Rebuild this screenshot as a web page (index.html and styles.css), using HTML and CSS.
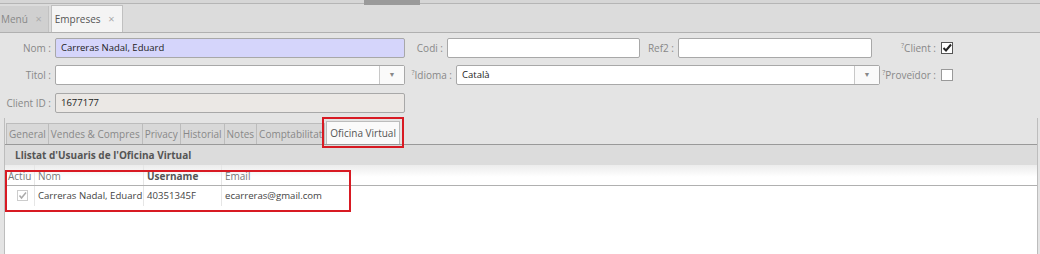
FILE: index.html
```html
<!DOCTYPE html>
<html lang="ca">
<head>
  <meta charset="UTF-8">
  <title>Empreses</title>
  <link rel="stylesheet" href="styles.css">
</head>
<body>
  <div class="topbar"><span class="handle"></span></div>
  <div class="doc-tabs">
    <div class="doc-tab">Menú <span class="close">×</span></div>
    <div class="doc-tab active">Empreses <span class="close">×</span></div>
  </div>
  <div class="form">
    <div class="row">
      <label class="lbl w-first">Nom :</label>
      <div class="field highlight w-main">Carreras Nadal, Eduard</div>
      <label class="lbl w-codi">Codi :</label>
      <div class="field w-codi-in"></div>
      <label class="lbl w-ref">Ref2 :</label>
      <div class="field w-ref-in"></div>
      <label class="lbl w-check"><sup>?</sup>Client :</label>
      <span class="check checked">
        <svg width="10" height="10" viewBox="0 0 10 10"><path d="M1.5 5 L4 7.5 L9 1.5" fill="none" stroke="#222" stroke-width="2"/></svg>
      </span>
    </div>
    <div class="row">
      <label class="lbl w-first">Titol :</label>
      <div class="field select w-main"><span class="value"></span><span class="arrow">▼</span></div>
      <label class="lbl w-idioma"><sup>?</sup>Idioma :</label>
      <div class="field select w-idioma-in"><span class="value">Català</span><span class="arrow">▼</span></div>
      <label class="lbl w-prov"><sup>?</sup>Proveïdor :</label>
      <span class="check"></span>
    </div>
    <div class="row">
      <label class="lbl w-first">Client ID :</label>
      <div class="field disabled w-main">1677177</div>
    </div>
  </div>
  <div class="panel">
    <div class="tabs">
      <div class="tab">General</div>
      <div class="tab">Vendes &amp; Compres</div>
      <div class="tab">Privacy</div>
      <div class="tab">Historial</div>
      <div class="tab">Notes</div>
      <div class="tab">Comptabilitat</div>
      <div class="tab selected">Oficina Virtual</div>
    </div>
    <div class="panel-title">Llistat d'Usuaris de l'Oficina Virtual</div>
    <div class="grid">
      <div class="grid-head">
        <div class="col c-actiu">Actiu</div>
        <div class="col c-nom">Nom</div>
        <div class="col c-user bold">Username</div>
        <div class="col c-email">Email</div>
      </div>
      <div class="grid-row">
        <div class="col c-actiu"><span class="mini-check">
          <svg width="9" height="9" viewBox="0 0 9 9"><path d="M1.5 4.5 L3.5 7 L8 1.5" fill="none" stroke="#aaa" stroke-width="1.5"/></svg>
        </span></div>
        <div class="col c-nom">Carreras Nadal, Eduard</div>
        <div class="col c-user">40351345F</div>
        <div class="col c-email">ecarreras@gmail.com</div>
      </div>
      <div class="marker"></div>
    </div>
  </div>
</body>
</html>
```

FILE: styles.css
```css
body {
  margin: 0;
  font-family: "Open Sans", Arial, sans-serif;
  font-size: 10px;
  color: #333;
  background: #e4e4e4;
  height: 254px;
  overflow: hidden;
}
.topbar {
  height: 3px;
  background: #d6d6d6;
  border-bottom: 1px solid #b5b5b5;
  position: relative;
}
.handle {
  position: absolute;
  left: 364px;
  top: 0;
  width: 56px;
  height: 5px;
  background: #9a9a9a;
}
.doc-tabs {
  display: flex;
  align-items: flex-end;
  height: 28px;
  background: #dcdcdc;
  border-bottom: 1px solid #b0b0b0;
}
.doc-tab {
  height: 26px;
  line-height: 26px;
  padding: 0 6px 0 1px;
  background: #d0d0d0;
  color: #888;
  border-right: 1px solid #c2c2c2;
  white-space: nowrap;
}
.doc-tab.active {
  background: #f4f4f4;
  color: #555;
  border: 1px solid #c0c0c0;
  border-bottom: none;
  margin-left: 2px;
  padding: 0 8px 0 3px;
}
.close {
  color: #aaa;
  font-size: 11px;
  margin-left: 5px;
}
.form {
  padding: 1px 0 0 0;
  height: 84px;
}
.row {
  display: flex;
  align-items: center;
  height: 27.5px;
}
.lbl {
  text-align: right;
  color: #888;
  padding-right: 4px;
  box-sizing: border-box;
  white-space: nowrap;
}
.lbl sup {
  font-size: 7px;
  vertical-align: 4px;
}
.w-first { width: 55px; }
.w-main { width: 350px; }
.w-codi { width: 42px; }
.w-codi-in { width: 193px; }
.w-ref { width: 38px; }
.w-ref-in { width: 194px; }
.w-check { width: 68px; }
.w-idioma { width: 51px; }
.w-idioma-in { width: 424px; }
.w-prov { width: 60px; }
.field {
  height: 20px;
  line-height: 18px;
  box-sizing: border-box;
  border: 1px solid #a8a8a8;
  border-radius: 2px;
  background: #fff;
  padding: 0 5px;
  color: #222;
  font-size: 9.5px;
  white-space: nowrap;
}
.highlight {
  background: #d5d5fb;
}
.disabled {
  background: #ebe8e5;
}
.select {
  display: flex;
  padding-right: 0;
}
.select .value {
  flex: 1;
}
.arrow {
  width: 24px;
  text-align: center;
  border-left: 1px solid #c8c8c8;
  color: #888;
  font-size: 7px;
  background: #fafafa;
}
.check {
  width: 10px;
  height: 10px;
  border: 1px solid #999;
  background: #fff;
  margin-left: 1px;
  display: flex;
  align-items: center;
  justify-content: center;
}
.check.checked {
  border-color: #555;
}
.panel {
  margin-left: 4px;
  width: 1032px;
  height: 144px;
  background: #fff;
  border-left: 1px solid #bdbdbd;
  border-right: 1px solid #bdbdbd;
}
.tabs {
  display: flex;
  align-items: flex-end;
  height: 26px;
  background: #e4e4e4;
  border-bottom: 1px solid #999;
  padding-left: 1px;
}
.tab {
  height: 20px;
  line-height: 20px;
  padding: 0 2px;
  background: #d8d8d8;
  color: #888;
  border: 1px solid #bcbcbc;
  border-bottom: none;
  margin-right: -1px;
}
.tab.selected {
  background: #fafafa;
  color: #555;
  height: 22px;
  line-height: 22px;
  padding: 0 3px;
  margin-left: 2px;
  outline: 2px solid #d81a23;
  outline-offset: 2px;
}
.panel-title {
  height: 20px;
  line-height: 20px;
  background: #dcdcdc;
  font-weight: bold;
  color: #555;
  padding-left: 10px;
}
.grid {
  position: relative;
}
.grid-head {
  display: flex;
  height: 20px;
  line-height: 23px;
  background: linear-gradient(#ececec, #fff 60%);
  border-bottom: 1px solid #b0b0b0;
  color: #777;
}
.grid-row {
  display: flex;
  height: 20px;
  line-height: 20px;
  color: #444;
  font-size: 9.6px;
}
.col {
  box-sizing: border-box;
  padding-left: 3px;
  border-right: 1px solid #e6e6e6;
  white-space: nowrap;
  overflow: hidden;
}
.bold { font-weight: bold; color: #555; }
.c-actiu { width: 30px; padding-left: 3px; }
.c-nom { width: 109px; }
.c-user { width: 78px; }
.c-email { width: 120px; border-right: none; }
.mini-check {
  display: inline-flex;
  width: 9px;
  height: 9px;
  border: 1px solid #ccc;
  margin-left: 9px;
  vertical-align: -1px;
}
.marker {
  position: absolute;
  left: 0;
  top: 5px;
  width: 342px;
  height: 38px;
  border: 2px solid #d81a23;
}
```
